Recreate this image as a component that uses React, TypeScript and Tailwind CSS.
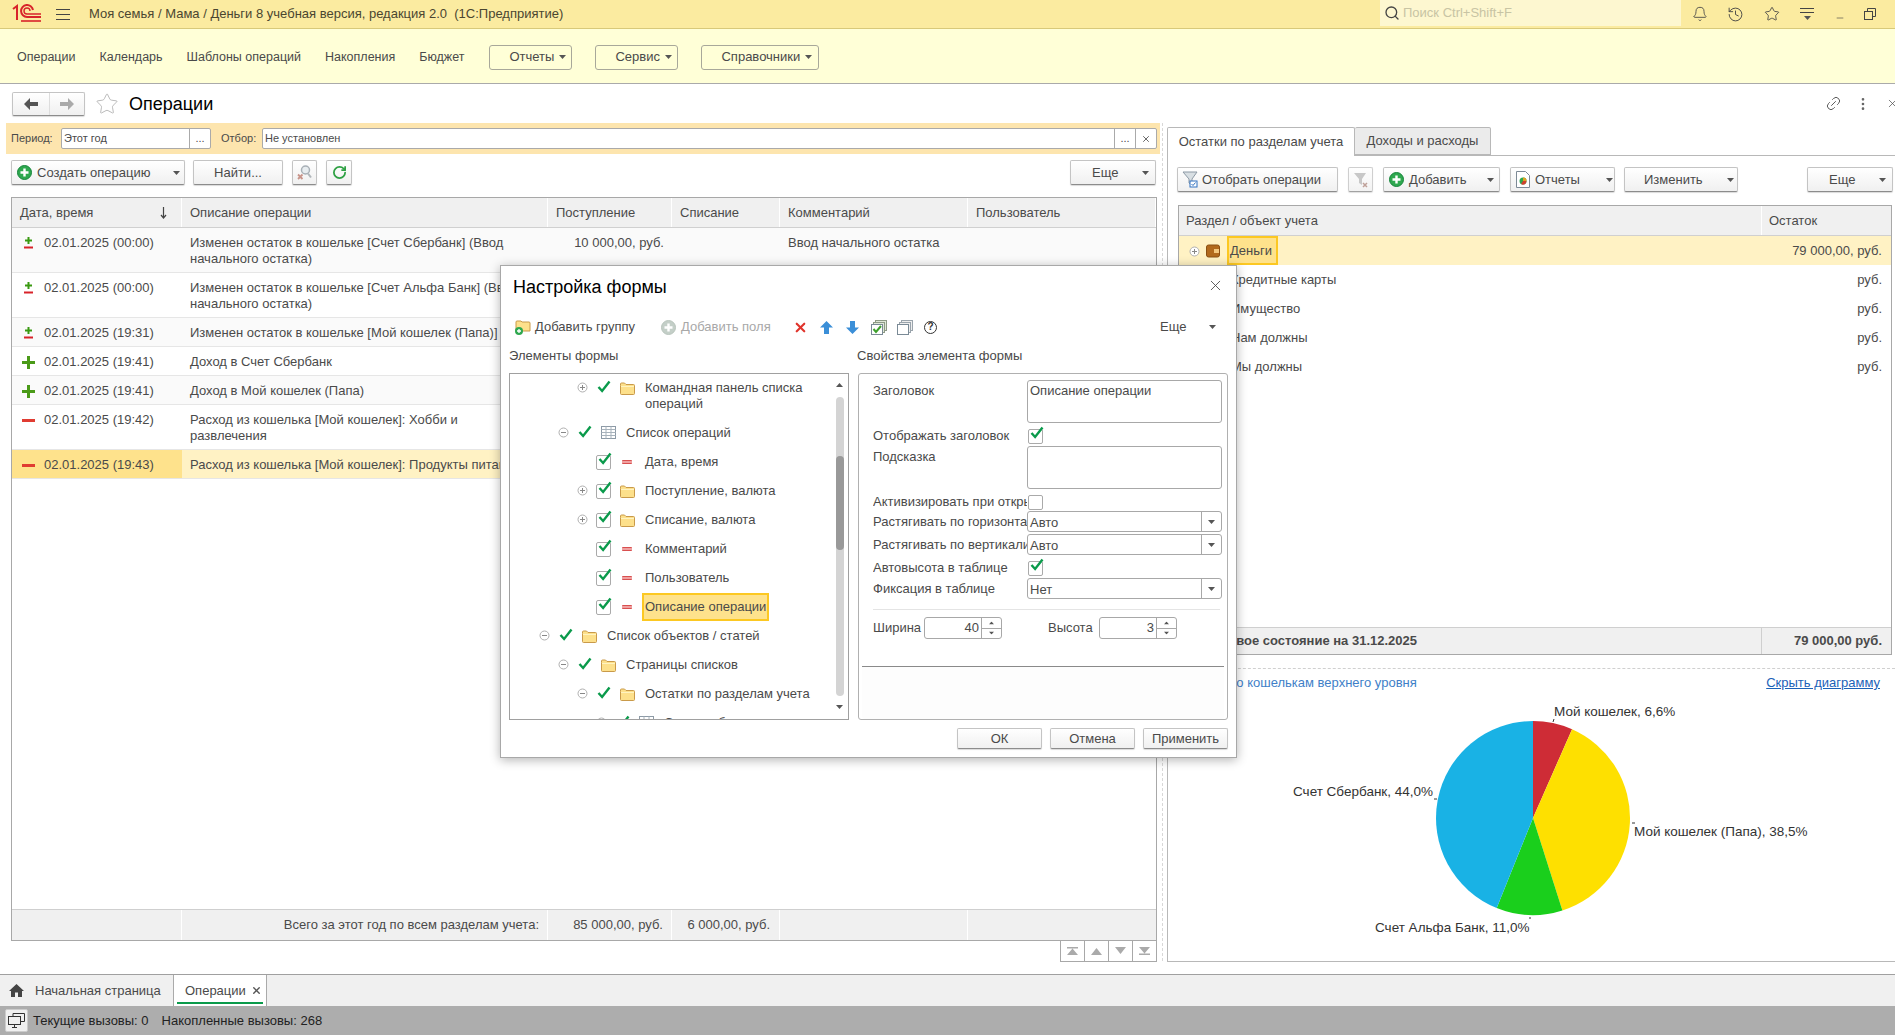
import type { ReactNode } from 'react';
import { X, Minus, Bell, History, Star, Link2, EllipsisVertical, Search, RotateCw } from 'lucide-react';

const text = 'text-[#4a4a4a]';

function Caret({ className = '' }: { className?: string }) {
  return (
    <svg width="7" height="4" viewBox="0 0 7 4" className={`shrink-0 ${className}`} aria-hidden="true">
      <path d="M0 0h7L3.5 4z" fill="#555" />
    </svg>
  );
}

function Btn({ className, children }: { className: string; children: ReactNode }) {
  return (
    <div
      className={`flex shrink-0 items-center whitespace-nowrap rounded-[2px] border border-[#c4c4c4] border-b-[#8c8c8c] bg-linear-to-b from-white to-[#f0f0f0] shadow-[0_1px_1px_rgba(0,0,0,0.15)] ${text} ${className}`}
    >
      {children}
    </div>
  );
}

function PlusCircle({ gray = false }: { gray?: boolean }) {
  return (
    <svg width="15" height="15" viewBox="0 0 15 15" className="shrink-0" aria-hidden="true">
      <circle cx="7.5" cy="7.5" r="7" fill={gray ? '#c4cfc8' : '#2fa84f'} stroke={gray ? '#b8c4bc' : '#14853a'} />
      <path d="M7.5 3.5v8M3.5 7.5h8" stroke="#fff" strokeWidth="2.4" />
    </svg>
  );
}

function Logo() {
  return (
    <svg width="30" height="20" viewBox="0 0 30 20" aria-hidden="true">
      <g fill="none" stroke="#d8232a" strokeWidth="2">
        <path d="M1 5l4-3v14" />
        <path d="M21 6a6 6 0 1 0-6 7h14" />
        <path d="M9 17h20" strokeWidth="1.6" />
        <path d="M18 7a3 3 0 1 0-3 3h14" strokeWidth="1.4" />
      </g>
    </svg>
  );
}

function Folder() {
  return (
    <svg width="15" height="13" viewBox="0 0 15 13" className="mt-[2px] shrink-0" aria-hidden="true">
      <path d="M.5 3.5V2q0-1 1-1h3l1.5 1.5h7.5q1 0 1 1v8q0 1-1 1h-12q-1 0-1-1z" fill="#fde08b" stroke="#c99a4a" />
      <path d="M1 4.5h13" stroke="#fff3c0" />
    </svg>
  );
}

function TableIcon() {
  return (
    <svg width="15" height="13" viewBox="0 0 15 13" className="mt-[1px] shrink-0" aria-hidden="true">
      <rect x=".5" y=".5" width="14" height="12" fill="#fff" stroke="#8d9aa6" />
      <path d="M.5 3.5h14M5 .5v12M10 .5v12M.5 6.5h14M.5 9.5h14" stroke="#a8b3bc" />
    </svg>
  );
}

function FieldIcon() {
  return <div className="mx-[2px] mt-[6px] h-[4px] w-[10px] shrink-0 rounded-[1px] border-y border-[#d85050] bg-[#f0a0a0]" />;
}

function CheckMark({ className = '' }: { className?: string }) {
  return (
    <svg width="14" height="13" viewBox="0 0 14 13" className={className} aria-hidden="true">
      <path d="M1.5 7l3.6 4L12.5 1.5" fill="none" stroke="#0a9a4b" strokeWidth="2.4" />
    </svg>
  );
}

function CheckBox({ checked }: { checked: boolean }) {
  return (
    <div className="relative h-[15px] w-[15px] shrink-0 rounded-[2px] border border-[#aaa] bg-white">
      {checked ? <CheckMark className="absolute -top-[4px] left-[1px]" /> : null}
    </div>
  );
}

function Expander({ open }: { open: boolean }) {
  return (
    <svg width="11" height="11" viewBox="0 0 11 11" className="mt-[2px] shrink-0" aria-hidden="true">
      <circle cx="5.5" cy="5.5" r="4.5" fill="#fff" stroke="#b0b0b0" />
      <path d={open ? 'M3 5.5h5' : 'M3 5.5h5M5.5 3v5'} stroke="#888" />
    </svg>
  );
}

function StatusIcon({ kind }: { kind: string }) {
  if (kind === 'mixed') {
    return (
      <svg width="13" height="13" viewBox="0 0 13 13" aria-hidden="true">
        <path d="M6.500 0v7M3 3.500h7" stroke="#3a9a12" strokeWidth="2" />
        <path d="M2 10.500h9" stroke="#d8232a" strokeWidth="2" />
      </svg>
    );
  }
  if (kind === 'plus') {
    return (
      <svg width="13" height="13" viewBox="0 0 13 13" aria-hidden="true">
        <path d="M6.500 0v13M0 6.500h13" stroke="#4a9a18" strokeWidth="3" />
      </svg>
    );
  }
  return <div className="h-[3px] w-[13px] bg-[#e03c32]" />;
}

const operations = [
  { kind: 'mixed', date: '02.01.2025 (00:00)', desc: 'Изменен остаток в кошельке [Счет Сбербанк] (Ввод начального остатка)', income: '10 000,00, руб.', comment: 'Ввод начального остатка' },
  { kind: 'mixed', date: '02.01.2025 (00:00)', desc: 'Изменен остаток в кошельке [Счет Альфа Банк] (Ввод начального остатка)', income: '', comment: '' },
  { kind: 'mixed', date: '02.01.2025 (19:31)', desc: 'Изменен остаток в кошельке [Мой кошелек (Папа)]', income: '', comment: '' },
  { kind: 'plus', date: '02.01.2025 (19:41)', desc: 'Доход в Счет Сбербанк', income: '', comment: '' },
  { kind: 'plus', date: '02.01.2025 (19:41)', desc: 'Доход в Мой кошелек (Папа)', income: '', comment: '' },
  { kind: 'minus', date: '02.01.2025 (19:42)', desc: 'Расход из кошелька [Мой кошелек]: Хобби и развлечения', income: '', comment: '' },
  { kind: 'minus', date: '02.01.2025 (19:43)', desc: 'Расход из кошелька [Мой кошелек]: Продукты питания', income: '', comment: '', selected: true },
];

const gridCols = 'grid grid-cols-[170px_366px_124px_108px_188px_1fr]';

function OperationsTable() {
  return (
    <div className="ml-[11px] flex h-[744px] w-[1146px] flex-col border border-[#a8a8a8]">
      <div className={`${gridCols} h-[30px] shrink-0 border-b border-[#d0d0d0] bg-[#f0f0f0] ${text}`}>
        <div className="flex items-center justify-between border-r border-white pl-[8px] pr-[14px]">
          <span>Дата, время</span>
          <svg width="7" height="12" viewBox="0 0 7 12" aria-hidden="true">
            <path d="M3.500 0v10M1 8l2.500 3L6 8" fill="none" stroke="#444" strokeWidth="1.200" />
          </svg>
        </div>
        {['Описание операции', 'Поступление', 'Списание', 'Комментарий', 'Пользователь'].map((h) => (
          <div key={h} className="flex items-center border-r border-white pl-[8px]">{h}</div>
        ))}
      </div>
      <div className="flex-1">
        {operations.map((op, i) => (
          <div
            key={i}
            className={`${gridCols} border-b border-[#e6e6e6] ${op.selected ? 'bg-[#fff2c4]' : i % 2 === 0 ? 'bg-[#fafafa]' : 'bg-white'}`}
          >
            <div className={`flex gap-[9px] pb-[5px] pl-[10px] pt-[7px] leading-[16px] ${op.selected ? 'bg-[#fee28c]' : ''}`}>
              <div className="flex h-[16px] w-[13px] items-center justify-center"><StatusIcon kind={op.kind} /></div>
              <span>{op.date}</span>
            </div>
            <div className="pb-[5px] pl-[8px] pr-[16px] pt-[7px] leading-[16px]">{op.desc}</div>
            <div className="pb-[5px] pr-[8px] pt-[7px] text-right leading-[16px]">{op.income}</div>
            <div />
            <div className="pb-[5px] pl-[8px] pt-[7px] leading-[16px]">{op.comment}</div>
            <div />
          </div>
        ))}
      </div>
      <div className={`${gridCols} h-[31px] shrink-0 items-stretch border-t border-[#cfcfcf] bg-[#f0f0f0]`}>
        <div className="border-r border-white" />
        <div className="flex items-center justify-end border-r border-white pr-[8px]">Всего за этот год по всем разделам учета:</div>
        <div className="flex items-center justify-end border-r border-white pr-[8px]">85 000,00, руб.</div>
        <div className="flex items-center justify-end border-r border-white pr-[9px]">6 000,00, руб.</div>
        <div className="border-r border-white" />
        <div />
      </div>
    </div>
  );
}

function TriIcon({ d }: { d: string }) {
  return (
    <div className="flex h-full w-[24px] items-center justify-center border-l border-[#a8a8a8]">
      <svg width="11" height="8" viewBox="0 0 11 8" aria-hidden="true"><path d={d} fill="#aaa" /></svg>
    </div>
  );
}

function LeftForm() {
  return (
    <div className="w-[1160px] shrink-0">
      <div className="ml-[6px] flex h-[31px] items-center bg-[#fde5ae] text-[11px]">
        <span className="ml-[5px] w-[50px]">Период:</span>
        <div className="flex h-[21px] w-[150px] rounded-[2px] border border-[#aaa] bg-white">
          <span className="flex-1 pl-[2px] leading-[19px]">Этот год</span>
          <span className="w-[21px] border-l border-[#aaa] text-center leading-[19px]">...</span>
        </div>
        <span className="ml-[10px] w-[41px]">Отбор:</span>
        <div className="flex h-[21px] w-[895px] rounded-[2px] border border-[#aaa] bg-white">
          <span className="flex-1 pl-[2px] leading-[19px]">Не установлен</span>
          <span className="w-[21px] border-l border-[#aaa] text-center leading-[19px]">...</span>
          <span className="flex w-[21px] items-center justify-center border-l border-[#aaa]"><X size={10} /></span>
        </div>
      </div>
      <div className="mt-[6px] flex h-[25px] pl-[11px]">
        <Btn className="w-[174px] gap-[5px] pl-[5px]">
          <PlusCircle />
          <span>Создать операцию</span>
          <Caret className="ml-[18px]" />
        </Btn>
        <Btn className="ml-[8px] w-[90px] justify-center">Найти...</Btn>
        <Btn className="ml-[9px] w-[25px] justify-center">
          <svg width="17" height="17" viewBox="0 0 17 17" aria-hidden="true">
            <circle cx="9.500" cy="6" r="4" fill="#e8edf0" stroke="#a8b0b6" strokeWidth="1.500" />
            <path d="M12 9.500l3 4" stroke="#b0b6ba" strokeWidth="2" />
            <path d="M2 10.500l4.500 4.500m0-4.500L2 15" stroke="#c8948a" strokeWidth="1.800" />
          </svg>
        </Btn>
        <Btn className="ml-[9px] w-[26px] justify-center">
          <RotateCw size={15} strokeWidth={2.8} className="text-[#2ea043]" />
        </Btn>
        <Btn className="ml-[718px] w-[86px] pl-[21px]">
          <span>Еще</span>
          <Caret className="ml-[24px]" />
        </Btn>
      </div>
      <div className="mt-[12px]"><OperationsTable /></div>
      <div className="ml-[1060px] flex h-[21px] w-[97px] border-b border-r border-[#a8a8a8]">
        <TriIcon d="M0 0h11v1.500H0zM5.500 1.500L11 8H0z" />
        <TriIcon d="M5.500 1L11 8H0z" />
        <TriIcon d="M0 0h11L5.500 7z" />
        <TriIcon d="M0 0h11L5.500 6.500zM0 6.500h11V8H0z" />
      </div>
    </div>
  );
}

const balances = ['Кредитные карты', 'Имущество', 'Нам должны', 'Мы должны'];

function Pie() {
  const cx = 365;
  const cy = 121;
  const r = 97;
  const slices = [
    { share: 0.066, color: '#ce2c36' },
    { share: 0.385, color: '#fee000' },
    { share: 0.11, color: '#1acf1c' },
    { share: 0.439, color: '#19b2e5' },
  ];
  let acc = 0;
  return (
    <svg width="727" height="264" viewBox="0 0 727 264" className="block" aria-label="Диаграмма">
      {slices.map((s) => {
        const a0 = acc * 2 * Math.PI;
        acc += s.share;
        const a1 = acc * 2 * Math.PI;
        const d = `M${cx} ${cy}L${cx + r * Math.sin(a0)} ${cy - r * Math.cos(a0)}A${r} ${r} 0 0 1 ${cx + r * Math.sin(a1)} ${cy - r * Math.cos(a1)}Z`;
        return <path key={s.color} d={d} fill={s.color} />;
      })}
      <g fill="#333" fontSize="13.5">
        <text x="386" y="18.500">Мой кошелек, 6,6%</text>
        <text x="466" y="138.500">Мой кошелек (Папа), 38,5%</text>
        <text x="125" y="98.500">Счет Сбербанк, 44,0%</text>
        <text x="207" y="234.500">Счет Альфа Банк, 11,0%</text>
      </g>
      <path d="M386 22l-1 3M266 102h3M464 126h3M362 220v2" stroke="#333" />
    </svg>
  );
}

function RightForm() {
  return (
    <div className="flex h-[838px] min-w-0 flex-1 flex-col pt-[4px]">
      <div className="flex h-[28px]">
        <div className="relative z-10 flex h-[29px] w-[188px] items-center justify-center rounded-t-[2px] border border-b-0 border-[#b8b8b8] bg-white">Остатки по разделам учета</div>
        <div className="flex w-[136px] items-center justify-center rounded-t-[2px] border border-l-0 border-[#b8b8b8] bg-[#ebebeb]">Доходы и расходы</div>
      </div>
      <div className="flex flex-1 flex-col border border-r-0 border-[#b8b8b8]">
        <div className="mt-[11px] flex h-[25px] pl-[9px]">
          <Btn className="w-[161px] gap-[4px] pl-[4px]">
            <svg width="16" height="17" viewBox="0 0 16 17" className="shrink-0" aria-hidden="true">
              <path d="M1 1h14L10 8v6l-3-2V8z" fill="#d8dfe3" stroke="#8d9aa6" />
              <rect x="8" y="10" width="7" height="6" fill="#fff" stroke="#3070c0" />
              <path d="M9.500 13l1.500 1.500 2.500-3" fill="none" stroke="#3070c0" />
            </svg>
            <span>Отобрать операции</span>
          </Btn>
          <Btn className="ml-[10px] w-[25px] justify-center opacity-80">
            <svg width="16" height="16" viewBox="0 0 16 16" aria-hidden="true">
              <path d="M1 1h12L9 7v6L6 11V7z" fill="#bbb" />
              <path d="M10 11l4 4m0-4l-4 4" stroke="#b08a80" strokeWidth="1.5" />
            </svg>
          </Btn>
          <Btn className="ml-[10px] w-[117px] gap-[5px] pl-[5px]">
            <PlusCircle />
            <span>Добавить</span>
            <Caret className="ml-[16px]" />
          </Btn>
          <Btn className="ml-[10px] w-[105px] gap-[5px] pl-[5px]">
            <svg width="14" height="17" viewBox="0 0 14 17" className="shrink-0" aria-hidden="true">
              <path d="M.5.5h9l4 4v12H.5z" fill="#fff" stroke="#7d8a96" />
              <circle cx="7" cy="10" r="3.500" fill="#2fa84f" />
              <path d="M7 10V6.500a3.500 3.500 0 0 1 3.500 3.500z" fill="#e0a020" />
              <path d="M7 10h3.500A3.500 3.500 0 0 1 5 13z" fill="#d04030" />
            </svg>
            <span>Отчеты</span>
            <Caret className="ml-[21px]" />
          </Btn>
          <Btn className="ml-[9px] w-[114px] pl-[19px]">
            <span>Изменить</span>
            <Caret className="ml-[24px]" />
          </Btn>
          <Btn className="ml-[69px] w-[86px] pl-[21px]">
            <span>Еще</span>
            <Caret className="ml-[24px]" />
          </Btn>
        </div>
        <div className="ml-[10px] mt-[13px] flex h-[450px] w-[714px] flex-col border border-[#a8a8a8]">
          <div className="flex h-[30px] shrink-0 border-b border-[#d0d0d0] bg-[#f0f0f0]">
            <div className="flex w-[583px] items-center border-r border-white pl-[7px]">Раздел / объект учета</div>
            <div className="flex flex-1 items-center pl-[7px]">Остаток</div>
          </div>
          <div className="flex-1">
            <div className="flex h-[29px] items-center bg-[#fff2c4]">
              <div className="ml-[10px]"><Expander open={false} /></div>
              <svg width="14" height="14" viewBox="0 0 14 14" className="ml-[6px]" aria-hidden="true">
                <rect x=".5" y="1" width="13" height="12" rx="2" fill="#b26a1c" stroke="#8a5012" />
                <rect x="8" y="5" width="5" height="4" fill="#f3c77c" />
              </svg>
              <div className="ml-[7px] flex h-[29px] w-[51px] items-center border-2 border-[#fcc822] bg-[#fee28c] pl-[1px]">Деньги</div>
              <span className="ml-auto pr-[9px]">79 000,00, руб.</span>
            </div>
            {balances.map((b) => (
              <div key={b} className="flex h-[29px] items-center pl-[52px] pr-[9px]">
                <span>{b}</span>
                <span className="ml-auto">руб.</span>
              </div>
            ))}
          </div>
          <div className="flex h-[27px] shrink-0 border-t border-[#cfcfcf] bg-[#f0f0f0] font-bold">
            <div className="flex w-[583px] items-center border-r border-[#cfcfcf]">
              <span className="w-[235px] whitespace-nowrap text-right">Финансовое состояние на 31.12.2025</span>
            </div>
            <div className="flex flex-1 items-center justify-end pr-[9px]">79 000,00 руб.</div>
          </div>
        </div>
        <div className="mt-[13px] border-t border-dashed border-[#d0d0d0]" />
        <div className="flex h-[28px] items-center pl-[59px] pr-[15px] text-[#3f7fc8]">
          <span>По кошелькам верхнего уровня</span>
          <span className="ml-auto text-[#1c62b8] underline">Скрыть диаграмму</span>
        </div>
        <Pie />
      </div>
    </div>
  );
}

const tree = [
  { level: 2, exp: 'plus', box: false, icon: 'folder', label: 'Командная панель списка операций' },
  { level: 1, exp: 'minus', box: false, icon: 'table', label: 'Список операций' },
  { level: 2, exp: '', box: true, icon: 'field', label: 'Дата, время' },
  { level: 2, exp: 'plus', box: true, icon: 'folder', label: 'Поступление, валюта' },
  { level: 2, exp: 'plus', box: true, icon: 'folder', label: 'Списание, валюта' },
  { level: 2, exp: '', box: true, icon: 'field', label: 'Комментарий' },
  { level: 2, exp: '', box: true, icon: 'field', label: 'Пользователь' },
  { level: 2, exp: '', box: true, icon: 'field', label: 'Описание операции', selected: true },
  { level: 0, exp: 'minus', box: false, icon: 'folder', label: 'Список объектов / статей' },
  { level: 1, exp: 'minus', box: false, icon: 'folder', label: 'Страницы списков' },
  { level: 2, exp: 'minus', box: false, icon: 'folder', label: 'Остатки по разделам учета' },
  { level: 3, exp: 'minus', box: false, icon: 'table', label: 'Список объектов' },
];

const levelPad: Record<number, string> = { 0: 'pl-[29px]', 1: 'pl-[48px]', 2: 'pl-[67px]', 3: 'pl-[86px]' };

function TreePanel() {
  return (
    <div className="relative h-[347px] w-[340px] overflow-hidden border border-[#a0a0a0]">
      {tree.map((row) => (
        <div key={row.label} className={`flex items-start pb-[7px] pr-[30px] pt-[6px] leading-[16px] ${levelPad[row.level]}`}>
          <div className="w-[11px] shrink-0">{row.exp ? <Expander open={row.exp === 'minus'} /> : null}</div>
          <div className="ml-[9px] flex h-[16px] w-[15px] shrink-0 items-center">
            {row.box ? <div className="-ml-[1px]"><CheckBox checked /></div> : <CheckMark className="-mt-[4px]" />}
          </div>
          <div className="ml-[8px] w-[15px] shrink-0">
            {row.icon === 'folder' ? <Folder /> : row.icon === 'table' ? <TableIcon /> : <FieldIcon />}
          </div>
          <div className={row.selected ? '-my-[6px] ml-[7px] border-2 border-[#fcc822] bg-[#fee28c] px-[1px] py-[4px]' : 'ml-[10px]'}>{row.label}</div>
        </div>
      ))}
      <div className="absolute bottom-[23px] right-[4px] top-[23px] w-[8px] rounded-[4px] bg-[#d4d4d4]" />
      <div className="absolute right-[4px] top-[82px] h-[94px] w-[8px] rounded-[4px] bg-[#999]" />
      <Caret className="absolute right-[5px] top-[9px] rotate-180" />
      <Caret className="absolute bottom-[10px] right-[5px]" />
    </div>
  );
}

function Select({ value }: { value: string }) {
  return (
    <div className="flex h-[21px] w-[195px] rounded-[3px] border border-[#a8a8a8] bg-white">
      <span className="flex-1 pl-[2px] leading-[21px]">{value}</span>
      <span className="flex w-[20px] items-center justify-center border-l border-[#a8a8a8]"><Caret /></span>
    </div>
  );
}

function Spin({ value }: { value: string }) {
  return (
    <div className="flex h-[22px] w-[78px] rounded-[3px] border border-[#a8a8a8] bg-white">
      <span className="flex-1 pr-[2px] text-right leading-[20px]">{value}</span>
      <div className="flex w-[20px] flex-col border-l border-[#a8a8a8]">
        <span className="flex flex-1 items-center justify-center border-b border-[#a8a8a8]"><Caret className="rotate-180 scale-75" /></span>
        <span className="flex flex-1 items-center justify-center"><Caret className="scale-75" /></span>
      </div>
    </div>
  );
}

function PropRow({ label, className, center = true, children }: { label: string; className: string; center?: boolean; children: ReactNode }) {
  return (
    <div className={`ml-[14px] flex ${center ? 'items-center' : 'items-start'} ${className}`}>
      <div className={`w-[154px] shrink-0 overflow-hidden whitespace-nowrap pr-[2px] leading-[16px] ${center ? '' : 'pt-[3px]'}`}>{label}</div>
      {children}
    </div>
  );
}

function PropsPanel() {
  return (
    <div className="flex h-[347px] w-[370px] flex-col rounded-[3px] border border-[#b0b0b0]">
      <PropRow label="Заголовок" className="mt-[6px]" center={false}>
        <div className="h-[43px] w-[195px] rounded-[3px] border border-[#a8a8a8] pl-[2px] leading-[20px]">Описание операции</div>
      </PropRow>
      <PropRow label="Отображать заголовок" className="mt-[5px]"><div className="ml-[1px]"><CheckBox checked /></div></PropRow>
      <PropRow label="Подсказка" className="mt-[2px]" center={false}>
        <div className="h-[43px] w-[195px] rounded-[3px] border border-[#a8a8a8]" />
      </PropRow>
      <PropRow label="Активизировать при открытии" className="mt-[5px]"><div className="ml-[1px]"><CheckBox checked={false} /></div></PropRow>
      <PropRow label="Растягивать по горизонтали" className="mt-[1px]"><Select value="Авто" /></PropRow>
      <PropRow label="Растягивать по вертикали" className="mt-[2px]"><Select value="Авто" /></PropRow>
      <PropRow label="Автовысота в таблице" className="mt-[5px]"><div className="ml-[1px]"><CheckBox checked /></div></PropRow>
      <PropRow label="Фиксация в таблице" className="mt-[2px]"><Select value="Нет" /></PropRow>
      <div className="ml-[14px] mr-[7px] mt-[10px] border-t border-[#e4e4e4]" />
      <div className="ml-[14px] mt-[7px] flex items-center">
        <span className="w-[51px]">Ширина</span>
        <Spin value="40" />
        <span className="ml-[46px] w-[51px]">Высота</span>
        <Spin value="3" />
      </div>
      <div className="mx-[3px] mt-[27px] flex-1 rounded-b-[3px] border-t border-[#8a8a8a] bg-[#fdfdfd]" />
    </div>
  );
}

function SettingsDialog() {
  return (
    <div className="absolute left-[500px] top-[265px] z-20 h-[493px] w-[737px] border border-[#a8a8a8] bg-white shadow-[0_2px_10px_rgba(0,0,0,0.3)]">
      <div className="flex h-[42px] items-center pl-[12px] pr-[12px]">
        <span className="text-[18px] text-black">Настройка формы</span>
        <X size={17} strokeWidth={1.2} className="-mt-[3px] ml-auto text-[#444]" />
      </div>
      <div className="flex h-[38px] items-center pl-[14px]">
        <svg width="16" height="16" viewBox="0 0 16 16" className="shrink-0" aria-hidden="true">
          <path d="M1 5V3q0-1 1-1h4l1 1h7q1 0 1 1v8H1z" fill="#fde08b" stroke="#c99a4a" />
          <circle cx="4" cy="12" r="4" fill="#2fa84f" />
          <path d="M4 10v4M2 12h4" stroke="#fff" strokeWidth="1.300" />
        </svg>
        <span className="ml-[4px] w-[126px]">Добавить группу</span>
        <PlusCircle gray />
        <span className="ml-[5px] w-[112px] text-[#a8a8a8]">Добавить поля</span>
        <X size={15} strokeWidth={3.500} className="text-[#e0342c]" />
        <svg width="13" height="13" viewBox="0 0 13 13" className="ml-[12px]" aria-hidden="true"><path d="M6.500 0L13 6.500H9V13H4V6.500H0z" fill="#3b8fd8" /></svg>
        <svg width="13" height="13" viewBox="0 0 13 13" className="ml-[13px]" aria-hidden="true"><path d="M6.500 13L13 6.500H9V0H4v6.500H0z" fill="#3b8fd8" /></svg>
        <svg width="16" height="15" viewBox="0 0 16 15" className="ml-[12px]" aria-hidden="true">
          <rect x="4.500" y=".5" width="11" height="10" fill="#dfe8d8" stroke="#8d9a86" />
          <rect x="2.500" y="2.500" width="11" height="10" fill="#dfe8d8" stroke="#8d9a86" />
          <rect x=".5" y="4.500" width="11" height="10" fill="#fff" stroke="#7a8a96" />
          <path d="M2.500 9l2.500 3 5-6" fill="none" stroke="#3da02c" strokeWidth="2" />
        </svg>
        <svg width="16" height="15" viewBox="0 0 16 15" className="ml-[10px]" aria-hidden="true">
          <rect x="4.500" y=".5" width="11" height="10" fill="#eee" stroke="#9aa4ac" />
          <rect x="2.500" y="2.500" width="11" height="10" fill="#eee" stroke="#9aa4ac" />
          <rect x=".5" y="4.500" width="11" height="10" fill="#fff" stroke="#7a8a96" />
        </svg>
        <div className="ml-[11px] flex h-[13px] w-[13px] items-center justify-center rounded-full border border-[#333] text-[10px] font-bold leading-none text-[#333]">?</div>
        <span className="ml-[223px]">Еще</span>
        <Caret className="ml-[23px]" />
      </div>
      <div className="flex h-[20px] items-center pl-[8px]">
        <span className="w-[348px]">Элементы формы</span>
        <span>Свойства элемента формы</span>
      </div>
      <div className="ml-[8px] mt-[7px] flex gap-[9px]">
        <TreePanel />
        <PropsPanel />
      </div>
      <div className="mt-[8px] flex h-[21px] justify-end gap-[8px] pr-[8px]">
        <Btn className="w-[85px] justify-center">ОК</Btn>
        <Btn className="w-[85px] justify-center">Отмена</Btn>
        <Btn className="w-[85px] justify-center">Применить</Btn>
      </div>
    </div>
  );
}

const sections = ['Операции', 'Календарь', 'Шаблоны операций', 'Накопления', 'Бюджет'];

export default function App() {
  return (
    <div className={`relative flex h-[1035px] w-[1895px] flex-col overflow-hidden bg-white font-['Liberation_Sans',Arial,sans-serif] text-[13px] ${text}`}>
      {/* title bar */}
      <div className="flex h-[29px] shrink-0 items-center border-b border-[#d8c97a] bg-[#fbeba0] text-[#4a4630]">
        <div className="ml-[12px]"><Logo /></div>
        <div className="ml-[14px] flex w-[14px] flex-col gap-[4px]">
          <div className="h-[1px] bg-[#444]" />
          <div className="h-[1px] bg-[#444]" />
          <div className="h-[1px] bg-[#444]" />
        </div>
        <span className="ml-[19px] whitespace-pre">Моя семья / Мама / Деньги 8 учебная версия, редакция 2.0  (1С:Предприятие)</span>
        <div className="ml-auto flex h-[26px] w-[301px] items-center self-start bg-[#fdf7d0] pl-[4px]">
          <Search size={16} className="text-[#444]" />
          <span className="ml-[3px] text-[#c8c4a4]">Поиск Ctrl+Shift+F</span>
        </div>
        <div className="ml-[11px] mr-[19px] flex w-[184px] items-center justify-between text-[#444]">
          <Bell size={16} strokeWidth={1.3} />
          <History size={17} strokeWidth={1.3} />
          <Star size={16} strokeWidth={1.3} />
          <div className="flex w-[16px] flex-col items-center gap-[3px]">
            <div className="h-[1px] w-[14px] bg-[#444]" />
            <div className="h-[1px] w-[14px] bg-[#444]" />
            <Caret />
          </div>
          <Minus size={10} strokeWidth={1.5} className="mt-[8px]" />
          <svg width="12" height="12" viewBox="0 0 12 12" aria-hidden="true">
            <path d="M3.500 3V.5h8v8H9" fill="none" stroke="#444" />
            <rect x=".5" y="3.500" width="8" height="8" fill="none" stroke="#444" />
          </svg>
        </div>
      </div>

      {/* sections */}
      <div className="flex h-[55px] shrink-0 items-center border-b border-[#aaa] bg-[#ffffd7] pl-[17px] pt-[2px]">
        <div className="flex gap-[24px] text-[12.5px]">
          {sections.map((s) => <span key={s}>{s}</span>)}
        </div>
        <div className="ml-[25px] flex gap-[23px]">
          {[['Отчеты', 'w-[83px]'], ['Сервис', 'w-[83px]'], ['Справочники', 'w-[118px]']].map(([label, w]) => (
            <div key={label} className={`flex h-[25px] items-center gap-[5px] rounded-[3px] border border-[#a8a89a] pl-[19px] ${w}`}>
              <span>{label}</span>
              <Caret />
            </div>
          ))}
        </div>
      </div>

      {/* form header */}
      <div className="flex h-[39px] shrink-0 items-center pl-[12px]">
        <Btn className="h-[24px] w-[73px] text-[#555]">
          <div className="flex h-full w-[37px] items-center justify-center border-r border-[#ddd]">
            <svg width="14" height="12" viewBox="0 0 14 12" aria-hidden="true"><path d="M0 6l6-6v4h8v4H6v4z" fill="#555" /></svg>
          </div>
          <div className="flex flex-1 items-center justify-center">
            <svg width="14" height="12" viewBox="0 0 14 12" aria-hidden="true"><path d="M14 6L8 0v4H0v4h8v4z" fill="#aaa" /></svg>
          </div>
        </Btn>
        <Star size={24} strokeWidth={0.8} className="ml-[10px] shrink-0 text-[#aaa]" />
        <span className="ml-[10px] shrink-0 pt-[2px] text-[18px] text-black">Операции</span>
        <Link2 size={17} strokeWidth={1.2} className="ml-[1612px] shrink-0 -rotate-45" />
        <EllipsisVertical size={16} className="ml-[13px] shrink-0 text-[#666]" />
        <X size={13} strokeWidth={1.3} className="ml-[15px] shrink-0" />
      </div>

      {/* main */}
      <div className="flex h-[851px] shrink-0">
        <LeftForm />
        <div className="ml-[2px] h-[838px] border-l border-dashed border-[#d8d8d8]" />
        <div className="ml-[4px] flex min-w-0 flex-1"><RightForm /></div>
      </div>

      {/* open windows */}
      <div className="flex h-[32px] shrink-0 border-t border-[#a0a0a0] bg-[#f0f0f0]">
        <div className="flex w-[174px] items-center border-r border-[#aaa] pl-[9px]">
          <svg width="15" height="13" viewBox="0 0 15 13" aria-hidden="true">
            <path d="M7.500 0L15 7h-2v6H9V8.500H6V13H2V7H0z" fill="#444" />
          </svg>
          <span className="ml-[11px]">Начальная страница</span>
        </div>
        <div className="relative flex w-[93px] items-center border-r border-[#aaa] bg-white pl-[11px]">
          <span>Операции</span>
          <X size={11} strokeWidth={3} className="ml-[5px] text-[#555]" />
          <div className="absolute bottom-[2px] left-[3px] right-[3px] h-[2px] bg-[#0a9a4b]" />
        </div>
      </div>

      {/* status */}
      <div className="flex h-[29px] shrink-0 items-center bg-[#adadad] pl-[5px] text-[#222]">
        <div className="flex h-[23px] w-[23px] items-center justify-center rounded-[2px] border border-[#ccc] bg-[#f0f0f0]">
          <svg width="17" height="15" viewBox="0 0 17 15" aria-hidden="true">
            <path d="M5 3.500V.5h11.500v8H13" fill="none" stroke="#333" />
            <rect x=".5" y="3.500" width="12" height="8" fill="#f0f0f0" stroke="#333" />
            <path d="M6.500 11.500v3M4 14.500h5" stroke="#333" />
          </svg>
        </div>
        <span className="ml-[5px]">Текущие вызовы: 0</span>
        <span className="ml-[13px]">Накопленные вызовы: 268</span>
      </div>

      <SettingsDialog />
    </div>
  );
}
